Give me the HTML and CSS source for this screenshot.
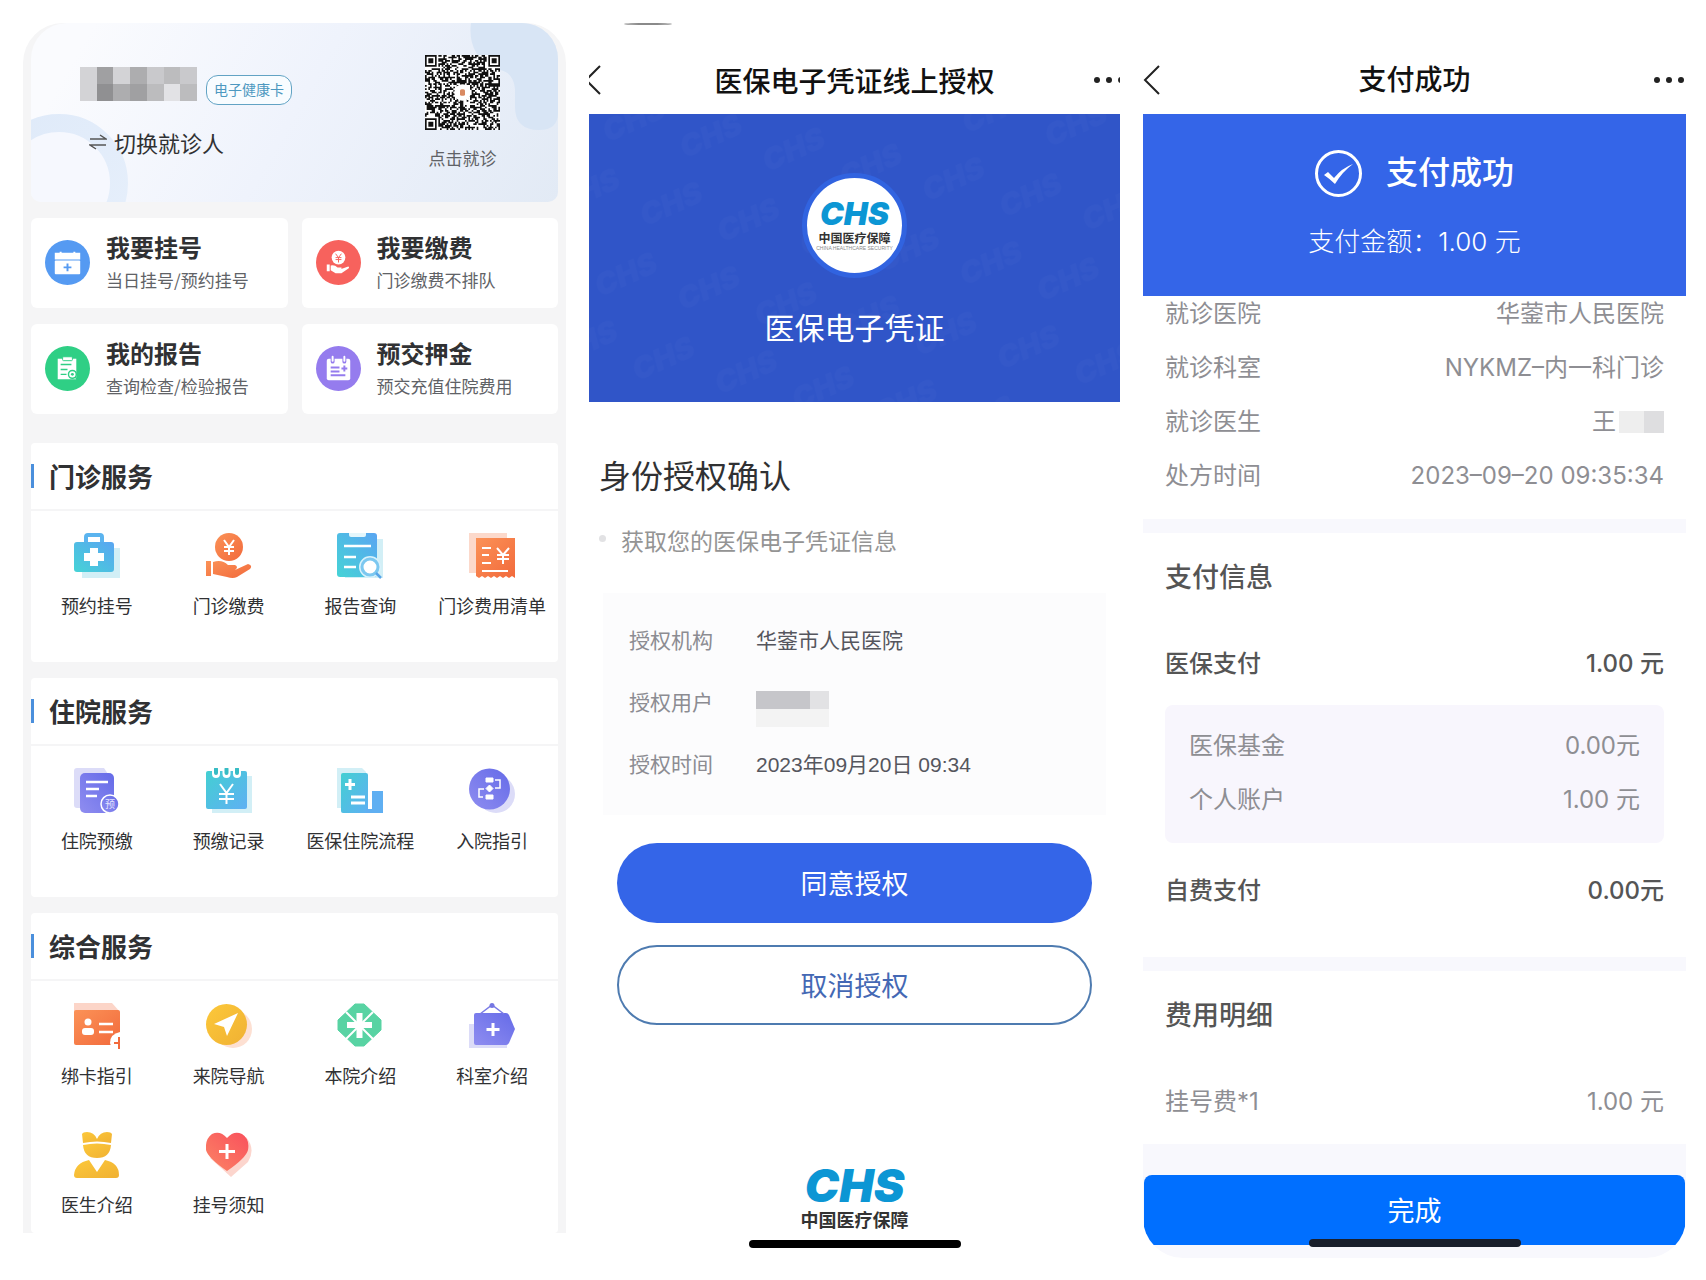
FILE: index.html
```html
<!DOCTYPE html>
<html lang="zh-CN">
    <head>
        <meta charset="utf-8">
        <title>医保移动支付</title>
        <link rel="stylesheet" href="styles.css">
    </head>
    <body>
        <svg class="defs" aria-hidden="true">
            <defs>
                <linearGradient id="teal" x1="0" y1="1" x2="1" y2="0">
                    <stop offset="0" stop-color="#45d3d6" />
                    <stop offset="1" stop-color="#5aa5f2" />
                </linearGradient>
                <linearGradient id="cyan" x1="0" y1="0" x2="1" y2="1">
                    <stop offset="0" stop-color="#43cfd2" />
                    <stop offset="1" stop-color="#5fb0f3" />
                </linearGradient>
                <linearGradient id="orange" x1="0" y1="0" x2="1" y2="1">
                    <stop offset="0" stop-color="#fb9257" />
                    <stop offset="1" stop-color="#f26a3c" />
                </linearGradient>
                <linearGradient id="purple" x1="0" y1="1" x2="1" y2="0">
                    <stop offset="0" stop-color="#8f8df0" />
                    <stop offset="1" stop-color="#656be8" />
                </linearGradient>
                <linearGradient id="yellow" x1="0" y1="0" x2="1" y2="1">
                    <stop offset="0" stop-color="#fcc83a" />
                    <stop offset="1" stop-color="#f0b133" />
                </linearGradient>
                <linearGradient id="red" x1="0" y1="1" x2="1" y2="0">
                    <stop offset="0" stop-color="#fb8565" />
                    <stop offset="1" stop-color="#f9505c" />
                </linearGradient>
                <linearGradient id="ring" x1="0" y1="0" x2="1" y2="1">
                    <stop offset="0" stop-color="#dfeaf9" />
                    <stop offset="1" stop-color="#e6effb" />
                </linearGradient>
                <pattern id="watermark" width="134" height="92" patternUnits="userSpaceOnUse" patternTransform="rotate(-24)">
                    <text x="6" y="34" class="mark">CHS</text>
                    <text x="70" y="80" class="mark">CHS</text>
                </pattern>
            </defs>
        </svg>

        <main class="screens">
            <section class="phone home">
                <header class="patient">
                    <svg class="patient-bg" viewBox="0 0 527 179" preserveAspectRatio="none" aria-hidden="true">
                        <circle cx="28" cy="160" r="60" fill="#f6f8fe" stroke="url(#ring)" stroke-width="18" />
                        <path d="M440 0H527V90Q527 107 508 107Q484 107 484 84V66Q482 46 462 46Q436 30 440 0Z" fill="#d8e5f5" />
                    </svg>
                    <div class="patient-info">
                        <div class="patient-name">
                            <span class="mosaic">
                                <i class="g1"></i><i class="g5"></i><i class="g1"></i><i class="g4"></i><i class="g2"></i><i class="g3"></i><i class="g2"></i>
                                <i class="g1"></i><i class="g6"></i><i class="g4"></i><i class="g5"></i><i class="g3"></i><i class="g0"></i><i class="g3"></i>
                            </span>
                            <a class="card-tag" href="#">电子健康卡</a>
                        </div>
                        <a class="switch" href="#">
                            <svg width="18" height="18" viewBox="0 0 18 18" fill="none" stroke="#555" stroke-width="1.5"><path d="M1 6H17L11 2M17 12H1L7 16" /></svg>
                            切换就诊人
                        </a>
                    </div>
                    <a class="qr" href="#">
                        <svg id="qr" viewBox="0 0 45 45" role="img" aria-label="二维码"></svg>
                        点击就诊
                    </a>
                </header>

                <nav class="quick">
                    <a href="#">
                        <svg viewBox="0 0 46 46">
                            <circle cx="23" cy="23" r="23" fill="#559af2" />
                            <path d="M11 14H35V19H11ZM16 12V16M30 12V16" fill="#fff" stroke="#fff" stroke-width="2" />
                            <rect x="10" y="21" width="26" height="14" rx="1" fill="#fff" />
                            <path d="M23 24V32M19 28H27" stroke="#559af2" stroke-width="2" />
                        </svg>
                        <span><b>我要挂号</b><small>当日挂号/预约挂号</small></span>
                    </a>
                    <a href="#">
                        <svg viewBox="0 0 46 46">
                            <circle cx="23" cy="23" r="23" fill="#f7625d" />
                            <circle cx="23" cy="18" r="7" fill="#fff" />
                            <path d="M20 14L23 18L26 14M23 18V23M20 18H26M20 20H26" fill="none" stroke="#f7625d" />
                            <path d="M11 25H14V32H11ZM15 26Q19 25 22 28H26Q27 29 25 30L33 27Q35 28 32 30L26 34H20L15 31Z" fill="#fff" />
                        </svg>
                        <span><b>我要缴费</b><small>门诊缴费不排队</small></span>
                    </a>
                    <a href="#">
                        <svg viewBox="0 0 46 46">
                            <circle cx="23" cy="23" r="23" fill="#2fcf85" />
                            <path d="M13 13H32V34H13Z" fill="#fff" />
                            <rect x="18" y="11" width="10" height="4" rx="1" fill="#fff" stroke="#2fcf85" />
                            <path d="M16 19H27M16 24H23M16 29H22" stroke="#2fcf85" stroke-width="1.5" />
                            <circle cx="28" cy="29" r="4" fill="#fff" stroke="#2fcf85" stroke-width="1.5" />
                            <path d="M31 32L34 35" stroke="#2fcf85" stroke-width="1.5" />
                            <circle cx="28" cy="29" r="1.5" fill="#2fcf85" />
                        </svg>
                        <span><b>我的报告</b><small>查询检查/检验报告</small></span>
                    </a>
                    <a href="#">
                        <svg viewBox="0 0 46 46">
                            <circle cx="23" cy="23" r="23" fill="#957cee" />
                            <rect x="11" y="13" width="24" height="22" rx="2" fill="#fff" />
                            <path d="M17 11V16M29 11V16" stroke="#957cee" stroke-width="4" stroke-linecap="round" />
                            <path d="M17 11V15M29 11V15" stroke="#fff" stroke-width="2" stroke-linecap="round" />
                            <path d="M15 22H24M15 26H24M15 30H30M29 20V26M26 23H32" stroke="#957cee" stroke-width="2" />
                        </svg>
                        <span><b>预交押金</b><small>预交充值住院费用</small></span>
                    </a>
                </nav>

                <section class="service">
                    <h2>门诊服务</h2>
                    <div class="items">
                        <a href="#">
                            <svg viewBox="0 0 46 46">
                                <rect x="8" y="15" width="38" height="30" fill="#d2eff6" />
                                <path d="M12 10V4Q12 2 14 2H26Q28 2 28 4V10" fill="none" stroke="#5bb4ef" stroke-width="4" />
                                <rect y="9" width="40" height="30" rx="3" fill="url(#teal)" />
                                <path d="M20 15V33M10 24H30" stroke="#fff" stroke-width="8" />
                            </svg>
                            预约挂号
                        </a>
                        <a href="#">
                            <svg viewBox="0 0 46 46">
                                <circle cx="23" cy="14" r="14" fill="url(#orange)" />
                                <path d="M18 7L23 14L28 7M23 14V22M18 14H28M18 18H28" fill="none" stroke="#fff" stroke-width="2" />
                                <path d="M0 28H5V43H0ZM7 29Q16 26 22 32H29Q33 34 29 37L42 31Q47 32 44 36L31 44Q27 46 21 44L7 41Z" fill="url(#orange)" />
                            </svg>
                            门诊缴费
                        </a>
                        <a href="#">
                            <svg viewBox="0 0 46 46">
                                <rect x="8" y="6" width="38" height="39" fill="#d2eff6" />
                                <rect width="40" height="44" rx="3" fill="url(#teal)" />
                                <path d="M12 0H29V2Q29 4 27 4H14Q12 4 12 2Z" fill="#e4f6fb" />
                                <path d="M7 13H34M7 24H19M7 34H19" stroke="#fff" stroke-width="2.5" />
                                <circle cx="33" cy="34" r="9" fill="#fff" stroke="#d8f1fb" stroke-width="4" />
                                <circle cx="33" cy="34" r="8" fill="#fff" stroke="#7cc8f0" stroke-width="3" />
                                <path d="M39 40L44 45" stroke="#58a5e8" stroke-width="2.5" />
                            </svg>
                            报告查询
                        </a>
                        <a href="#">
                            <svg viewBox="0 0 46 46">
                                <path d="M0 0H38V40H0Z" fill="#fcd9cb" />
                                <path d="M7 5H46V45L43 43L40 45L37 43L34 45L31 43L28 45L25 43L22 45L19 43L16 45L13 43L10 45L7 43Z" fill="url(#orange)" />
                                <path d="M13 15H22M13 22H20M13 30H22M13 38H39M28 15L34 22L40 15M34 22V31M28 22H40M28 26H40" fill="none" stroke="#fff" stroke-width="2" />
                            </svg>
                            门诊费用清单
                        </a>
                    </div>
                </section>

                <section class="service">
                    <h2>住院服务</h2>
                    <div class="items">
                        <a href="#">
                            <svg viewBox="0 0 46 46">
                                <path d="M3 0H30L34 6V40H3Q0 40 0 37V3Q0 0 3 0Z" fill="#dcdcf8" />
                                <rect x="6" y="5" width="34" height="40" rx="5" fill="url(#purple)" />
                                <path d="M12 14H34M12 21H25M12 28H23" stroke="#fff" stroke-width="2.5" />
                                <circle cx="36" cy="36" r="9" fill="url(#purple)" stroke="#fff" stroke-width="1.5" />
                                <text x="31" y="40" class="pre">预</text>
                            </svg>
                            住院预缴
                        </a>
                        <a href="#">
                            <svg viewBox="0 0 46 46">
                                <rect x="6" y="8" width="40" height="37" fill="#d2eff6" />
                                <rect y="3" width="41" height="38" rx="2" fill="url(#cyan)" />
                                <path d="M10 2V6M20.5 2V6M31 2V6" stroke="#fff" stroke-width="8" stroke-linecap="round" />
                                <path d="M10 1V5M20.5 1V5M31 1V5" stroke="#37bcc4" stroke-width="4" stroke-linecap="round" />
                                <path d="M14 16L20.5 25L27 16M20.5 25V36M13 26H28M13 31H28" fill="none" stroke="#fff" stroke-width="2" />
                            </svg>
                            预缴记录
                        </a>
                        <a href="#">
                            <svg viewBox="0 0 46 46">
                                <path d="M0 0H25L29 4V40H0Z" fill="#d2eff6" />
                                <path d="M4 7Q4 5 6 5H29Q31 5 31 7V45H6Q4 45 4 43Z" fill="url(#cyan)" />
                                <path d="M29 40H46V45H29ZM35 23H46V45H35Z" fill="#5faff2" />
                                <path d="M13 11V22M8 16.5H18M14 29H28M14 35H28" stroke="#fff" stroke-width="3" />
                                <path d="M33 22V41" stroke="#fff" stroke-width="4" />
                            </svg>
                            医保住院流程
                        </a>
                        <a href="#">
                            <svg viewBox="0 0 46 46">
                                <circle cx="27" cy="26" r="19" fill="#dcdcf8" />
                                <circle cx="20.5" cy="21" r="20.5" fill="url(#purple)" />
                                <path d="M17 10H24V14H17ZM17 27H24V31H17ZM20.5 17L24 20.5L20.5 24L17 20.5Z" fill="#fff" stroke="#fff" />
                                <path d="M26 12H31V20H26M15 21H10V29H14" fill="none" stroke="#fff" stroke-width="1.5" />
                            </svg>
                            入院指引
                        </a>
                    </div>
                </section>

                <section class="service">
                    <h2>综合服务</h2>
                    <div class="items">
                        <a href="#">
                            <svg viewBox="0 0 46 46">
                                <path d="M0 0H38L46 9H0Z" fill="#fcd5c8" />
                                <rect y="7" width="46" height="35" rx="2" fill="url(#orange)" />
                                <circle cx="14" cy="19" r="3.5" fill="#fff" />
                                <rect x="8" y="25" width="12" height="7" rx="3" fill="#fff" />
                                <path d="M25 21H39M25 29H39" stroke="#fff" stroke-width="2.5" />
                                <path d="M46 29Q36 31 36 40L38 46H46Z" fill="#fff" />
                                <path d="M45 34V46M40 40H46" stroke="#f26a3c" stroke-width="2" />
                            </svg>
                            绑卡指引
                        </a>
                        <a href="#">
                            <svg viewBox="0 0 46 46">
                                <circle cx="27" cy="26" r="19" fill="#fde0d2" />
                                <circle cx="20.5" cy="21.5" r="20.5" fill="url(#yellow)" />
                                <path d="M32 10L8 21L18 24L21 33Z" fill="#fff" />
                            </svg>
                            来院导航
                        </a>
                        <a href="#">
                            <svg viewBox="0 0 46 46">
                                <path d="M18 1H27L44 17V27L27 43H18L1 27V17Z" fill="#58d3a3" stroke="#58d3a3" stroke-linejoin="round" />
                                <path d="M9 9L36 36M36 9L9 36" stroke="#fff" stroke-width="2" />
                                <path d="M22.5 10V35M10 22H35" stroke="#fff" stroke-width="6" />
                            </svg>
                            本院介绍
                        </a>
                        <a href="#">
                            <svg viewBox="0 0 46 46">
                                <path d="M0 21H38V45H0Z" fill="#dcdcf8" />
                                <path d="M7 10H37Q39 10 40 12L46 26L40 40Q39 42 37 42H7Q5 42 5 40V12Q5 10 7 10Z" fill="url(#purple)" />
                                <path d="M11 11L23 2L35 11" fill="none" stroke="#7a7be6" stroke-width="1.5" />
                                <circle cx="23" cy="2.5" r="2.5" fill="#7577e2" />
                                <path d="M24 20V33M17.5 26.5H30.5" stroke="#fff" stroke-width="3" />
                            </svg>
                            科室介绍
                        </a>
                        <a href="#">
                            <svg viewBox="0 0 46 46">
                                <path d="M8 2Q9 0 13 0Q20 0 23 7Q26 0 33 0Q37 0 38 2L37 11Q23 8 9 11Z" fill="url(#yellow)" />
                                <path d="M9 13Q23 10 37 13Q36 26 23 26Q10 26 9 13Z" fill="url(#yellow)" />
                                <path d="M15 28L23 40L31 28Q45 31 45 43Q45 46 42 46H3Q0 46 0 43Q1 31 15 28Z" fill="url(#yellow)" />
                            </svg>
                            医生介绍
                        </a>
                        <a href="#">
                            <svg viewBox="0 0 46 46">
                                <path d="M25 45L4 26L40 5Q50 17 42 30Z" fill="#fcd5cd" />
                                <path d="M21 6Q28 -2 36 2Q44 7 42 18Q40 26 21 39Q2 26 0 18Q-1 7 6 2Q14 -2 21 6Z" fill="url(#red)" />
                                <path d="M21 12V27M13 19.5H29" stroke="#fff" stroke-width="3" />
                            </svg>
                            挂号须知
                        </a>
                    </div>
                </section>
            </section>

            <section class="phone auth">
                <header class="navbar cut">
                    <button type="button" aria-label="返回"><svg width="17" height="30" viewBox="0 0 17 30" fill="none" stroke="#222" stroke-width="2"><path d="M16 1L2 15L16 29" /></svg></button>
                    <h1>医保电子凭证线上授权</h1>
                    <button type="button" aria-label="更多"><svg width="32" height="8" viewBox="0 0 32 8" fill="#222"><circle cx="4" cy="4" r="3" /><circle cx="16" cy="4" r="3" /><circle cx="28" cy="4" r="3" /></svg></button>
                </header>
                <div class="voucher">
                    <svg class="voucher-bg" aria-hidden="true"><rect width="100%" height="100%" fill="url(#watermark)" /></svg>
                    <div class="seal">
                        <span class="chs">CHS</span>
                        <span class="chs-cn">中国医疗保障</span>
                        <span class="chs-en">CHINA HEALTHCARE SECURITY</span>
                    </div>
                    <p>医保电子凭证</p>
                </div>
                <div class="confirm">
                    <h2>身份授权确认</h2>
                    <ul><li>获取您的医保电子凭证信息</li></ul>
                    <dl>
                        <dt>授权机构</dt><dd>华蓥市人民医院</dd>
                        <dt>授权用户</dt><dd><span class="hidden-user"></span></dd>
                        <dt>授权时间</dt><dd>2023年09月20日 09:34</dd>
                    </dl>
                    <div class="actions">
                        <button type="button" class="agree">同意授权</button>
                        <button type="button" class="cancel">取消授权</button>
                    </div>
                </div>
                <footer class="brand">
                    <span class="chs">CHS</span>
                    <span class="chs-cn">中国医疗保障</span>
                </footer>
                <div class="home-bar"></div>
            </section>

            <section class="phone paid">
                <header class="navbar">
                    <button type="button" aria-label="返回"><svg width="17" height="30" viewBox="0 0 17 30" fill="none" stroke="#222" stroke-width="2"><path d="M16 1L2 15L16 29" /></svg></button>
                    <h1>支付成功</h1>
                    <button type="button" aria-label="更多"><svg width="32" height="8" viewBox="0 0 32 8" fill="#222"><circle cx="3" cy="4" r="3" /><circle cx="15" cy="4" r="3" /><circle cx="27" cy="4" r="3" /></svg></button>
                </header>
                <div class="result">
                    <div class="result-title">
                        <svg width="47" height="47" viewBox="0 0 47 47"><circle cx="23.5" cy="23.5" r="22" fill="none" stroke="#fff" stroke-width="3" /><path d="M9 25L13 22L19 28Q27 18 38 14Q27 22 20 34Q15 29 9 25Z" fill="#fff" /></svg>
                        支付成功
                    </div>
                    <p>支付金额：1.00 元</p>
                </div>
                <dl class="rows visit">
                    <div><dt>就诊医院</dt><dd>华蓥市人民医院</dd></div>
                    <div><dt>就诊科室</dt><dd>NYKMZ–内一科门诊</dd></div>
                    <div><dt>就诊医生</dt><dd>王<span class="hidden-doctor"></span></dd></div>
                    <div><dt>处方时间</dt><dd>2023–09–20 09:35:34</dd></div>
                </dl>
                <section class="block">
                    <h2>支付信息</h2>
                    <dl class="rows strong"><div><dt>医保支付</dt><dd>1.00 元</dd></div></dl>
                    <dl class="rows sub">
                        <div><dt>医保基金</dt><dd>0.00元</dd></div>
                        <div><dt>个人账户</dt><dd>1.00 元</dd></div>
                    </dl>
                    <dl class="rows strong"><div><dt>自费支付</dt><dd>0.00元</dd></div></dl>
                </section>
                <section class="block fees">
                    <h2>费用明细</h2>
                    <dl class="rows"><div><dt>挂号费*1</dt><dd>1.00 元</dd></div></dl>
                </section>
                <footer class="done">
                    <button type="button">完成</button>
                    <div class="home-bar"></div>
                </footer>
            </section>
        </main>
        <script src="qr.js"></script>
    </body>
</html>
```

FILE: styles.css
```css
* {
    box-sizing: border-box;
}
body {
    margin: 0;
    background: #fff;
    color: #303133;
    font-family: "Noto Sans CJK SC", sans-serif;
}
h1, h2, p, dl, dd, ul {
    margin: 0;
    padding: 0;
}
a {
    color: inherit;
    text-decoration: none;
}
button {
    padding: 0;
    border: 0;
    background: none;
    font-family: inherit;
    cursor: pointer;
}
svg {
    display: block;
    flex: none;
}
.defs {
    position: absolute;
    width: 0;
    height: 0;
}
.mark {
    font: italic 900 30px Inter, sans-serif;
    fill: #fff;
    opacity: .02;
}
.pre {
    font-size: 10px;
    fill: #e4e4ff;
}
.screens {
    display: grid;
    grid-template-columns: 543fr 531fr 543fr;
    gap: 23px;
    align-items: start;
    padding: 23px 20px 22px 23px;
}
.phone {
    position: relative;
    overflow: hidden;
}

/* home */
.home {
    padding: 0 8px;
    background: #f5f5f6;
    border-radius: 40px 40px 0 0;
}
.patient {
    position: relative;
    display: flex;
    justify-content: space-between;
    height: 179px;
    padding: 32px 58px 0 49px;
    border-radius: 36px 36px 10px 10px;
    background: linear-gradient(120deg, #fafbfe 10%, #eff3fc 50%, #e2eaf5);
    overflow: hidden;
}
.patient-bg {
    position: absolute;
    left: 0;
    top: 0;
    width: 100%;
    height: 100%;
}
.patient-info, .qr {
    position: relative;
}
.patient-name {
    display: flex;
    align-items: flex-end;
    gap: 9px;
    padding-top: 12px;
}
.mosaic {
    display: grid;
    grid-template-columns: repeat(7, 1fr);
    width: 117px;
    height: 34px;
    margin-bottom: 4px;
}
.g0 { background: #e2e2e5; }
.g1 { background: #d3d3d6; }
.g2 { background: #c9c9cc; }
.g3 { background: #bcbcbe; }
.g4 { background: #adadaf; }
.g5 { background: #a0a0a2; }
.g6 { background: #909092; }
.card-tag {
    height: 30px;
    padding: 0 7px;
    border: 1px solid #62a3c4;
    border-radius: 12px;
    color: #4d98c0;
    font-size: 14px;
    line-height: 26px;
    background: #f8fcff;
}
.switch {
    display: flex;
    align-items: center;
    gap: 7px;
    margin: 21px 0 0 9px;
    font-size: 22px;
    line-height: 32px;
}
.qr {
    display: flex;
    flex-direction: column;
    align-items: center;
    gap: 15px;
    color: #606266;
    font-size: 17px;
    line-height: 26px;
}
.qr svg {
    width: 75px;
    height: 75px;
}
.quick {
    display: grid;
    grid-template-columns: 1fr 1fr;
    gap: 16px 14px;
    margin: 16px 0 29px;
}
.quick a {
    display: flex;
    align-items: center;
    gap: 16px;
    height: 90px;
    padding: 0 0 1px 14px;
    border-radius: 6px;
    background: #fff;
}
.quick svg {
    width: 45px;
    height: 45px;
}
.quick span {
    padding-bottom: 2px;
}
.quick b, .quick small {
    display: block;
}
.quick b {
    font-size: 24px;
    line-height: 36px;
}
.quick small {
    color: #606266;
    font-size: 17px;
    line-height: 30px;
}
.service {
    margin-bottom: 16px;
    border-radius: 4px;
    background: #fff;
}
.service h2 {
    display: flex;
    align-items: center;
    gap: 15px;
    height: 68px;
    border-bottom: 2px solid #f5f5f6;
    font-size: 26px;
    line-height: 64px;
}
.service h2::before {
    content: "";
    width: 3px;
    height: 24px;
    background: #4a8fdc;
}
.items {
    display: grid;
    grid-template-columns: repeat(4, 1fr);
    row-gap: 44px;
    padding: 22px 0 44px;
}
.items a {
    display: flex;
    flex-direction: column;
    align-items: center;
    gap: 13px;
    font-size: 18px;
    line-height: 26px;
    white-space: nowrap;
}
.items svg {
    width: 46px;
    height: 46px;
}
.service:last-child {
    margin-bottom: 0;
}
.service:last-child .items {
    padding-bottom: 16px;
}

/* shared top bar */
.navbar {
    display: flex;
    align-items: center;
    justify-content: space-between;
    height: 91px;
    padding-top: 23px;
    color: #111;
}
.navbar h1 {
    font-size: 28px;
    font-weight: 500;
    line-height: 40px;
}
.navbar button {
    width: 32px;
}
.navbar.cut button {
    margin: 0 -5px;
}
.navbar.cut::before {
    content: "";
    position: absolute;
    top: 0;
    left: 35px;
    width: 48px;
    height: 2px;
    border-radius: 50%;
    background: #8a8a8a;
}
.home-bar {
    width: 212px;
    height: 8px;
    margin: 0 auto;
    border-radius: 4px;
    background: #000;
}

/* authorization */
.voucher {
    position: relative;
    padding: 59px 0 56px;
    background: #3055c8;
    color: #fff;
    text-align: center;
}
.voucher-bg {
    position: absolute;
    left: 0;
    top: 0;
    width: 100%;
    height: 100%;
}
.seal {
    position: relative;
    display: flex;
    flex-direction: column;
    align-items: center;
    width: 105px;
    height: 105px;
    margin: 0 auto 28px;
    padding-top: 19px;
    border: 5px solid #3163e0;
    border-radius: 50%;
    background: #fff;
}
.chs {
    color: #0c96d4;
    font-family: Inter, sans-serif;
    font-size: 32px;
    font-style: italic;
    font-weight: 900;
    line-height: 34px;
}
.chs-cn {
    color: #333;
    font-size: 12px;
    font-weight: bold;
    line-height: 14px;
}
.chs-en {
    color: #8a8a8a;
    font-family: "Liberation Sans", sans-serif;
    font-size: 5px;
    line-height: 6px;
    white-space: nowrap;
}
.voucher p {
    position: relative;
    font-size: 30px;
    line-height: 40px;
}
.confirm {
    padding: 50px 10px 0;
}
.confirm h2 {
    font-size: 32px;
    font-weight: normal;
    line-height: 44px;
}
.confirm ul {
    margin: 29px 0 38px;
    list-style: none;
}
.confirm li {
    display: flex;
    gap: 15px;
    color: #949494;
    font-size: 23px;
    line-height: 30px;
}
.confirm li::before {
    content: "";
    width: 7px;
    height: 7px;
    margin-top: 10px;
    border-radius: 50%;
    background: #e2e2e4;
}
.confirm dl {
    display: grid;
    grid-template-columns: 127px 1fr;
    margin: 0 4px;
    padding: 17px 26px 19px;
    background: #fcfcfd;
    font-family: "Liberation Sans", "Noto Sans CJK SC", sans-serif;
    font-size: 21px;
    line-height: 62px;
}
.confirm dt {
    color: #8c8c92;
}
.confirm dd {
    color: #55565e;
}
.hidden-user {
    display: block;
    width: 73px;
    height: 36px;
    margin-top: 19px;
    background: linear-gradient(#f3f3f3, #f3f3f3) 0 18px no-repeat, linear-gradient(90deg, #c6c6ca 54px, #e2e2e4 54px);
}
.actions {
    display: grid;
    gap: 22px;
    margin: 28px 18px 0;
}
.actions button {
    height: 80px;
    padding-bottom: 2px;
    border-radius: 40px;
    font-size: 27px;
}
.actions .agree {
    background: #3465e8;
    color: #fff;
}
.actions .cancel {
    border: 2px solid #4e7bb0;
    color: #4468b4;
}
.brand {
    display: flex;
    flex-direction: column;
    align-items: center;
    margin: 138px 0 9px;
}
.brand .chs {
    font-size: 46px;
    line-height: 44px;
}
.brand .chs-cn {
    font-size: 18px;
    line-height: 24px;
}

/* payment result */
.paid {
    border-radius: 0 0 40px 40px;
    font-family: Inter, "Noto Sans CJK SC", sans-serif;
}
.result {
    padding: 35px 0 36px;
    background: #3465e8;
    color: #fff;
    text-align: center;
}
.result-title {
    display: flex;
    align-items: center;
    justify-content: center;
    gap: 24px;
    margin-bottom: 27px;
    font-size: 32px;
    font-weight: 500;
    line-height: 48px;
}
.result p {
    font-size: 26px;
    font-weight: 300;
    line-height: 36px;
}
.rows {
    display: grid;
    gap: 20px;
    color: #8e8e93;
    font-size: 24px;
    line-height: 34px;
}
.rows div {
    display: flex;
    justify-content: space-between;
}
.rows dd {
    display: flex;
    align-items: center;
    white-space: pre;
}
.visit {
    padding: 1px 22px 26px;
}
.hidden-doctor {
    width: 45px;
    height: 22px;
    margin-left: 3px;
    background: linear-gradient(90deg, #eee 25px, #dedee0 25px);
}
.block {
    padding: 25px 22px 49px;
    border-top: 14px solid #f8f8fd;
}
.block h2 {
    margin-bottom: 49px;
    color: #555;
    font-size: 27px;
    font-weight: 500;
    line-height: 40px;
}
.strong {
    color: #555;
    font-weight: 500;
}
.sub {
    margin: 24px 0 31px;
    padding: 24px 24px 26px;
    border-radius: 8px;
    background: #f8f6fd;
}
.fees {
    padding-bottom: 25px;
}
.done {
    padding: 31px 1px 11px;
    background: #f8f8fd;
}
.done button {
    display: block;
    width: 100%;
    height: 70px;
    padding-bottom: 2px;
    border-radius: 8px 8px 0 0;
    background: #006fff;
    color: #fff;
    font-size: 27px;
}
.done .home-bar {
    position: relative;
    margin-top: -6px;
    background: #1a1f2c;
}
```

FILE: qr.js
```js
var size = 45,
    seed = 20230920,
    path = '';

function rand() {
    seed = (seed * 16807) % 2147483647;
    return seed / 2147483647;
}

function inFinder(x, y) {
    return (x < 8 && y < 8) || (x > size - 9 && y < 8) || (x < 8 && y > size - 9);
}

function square(x, y, w) {
    return 'M' + x + ' ' + y + 'h' + w + 'v' + w + 'h-' + w + 'z';
}

for (var y = 0; y < size; y++) {
    for (var x = 0; x < size; x++) {
        if (!inFinder(x, y) && rand() < .54) path += square(x, y, 1);
    }
}

[[0, 0], [size - 7, 0], [0, size - 7]].forEach(function (p) {
    path += square(p[0], p[1], 7) + square(p[0] + 1, p[1] + 1, 5) + square(p[0] + 2, p[1] + 2, 3);
});

document.getElementById('qr').innerHTML =
    '<rect width="45" height="45" fill="#fff"/>' +
    '<path fill-rule="evenodd" fill="#111" d="' + path + '"/>' +
    '<circle cx="22.5" cy="22.5" r="5" fill="#fff"/>' +
    '<rect x="21" y="20.5" width="3" height="4" rx="1" fill="#d98a62"/>';
```
